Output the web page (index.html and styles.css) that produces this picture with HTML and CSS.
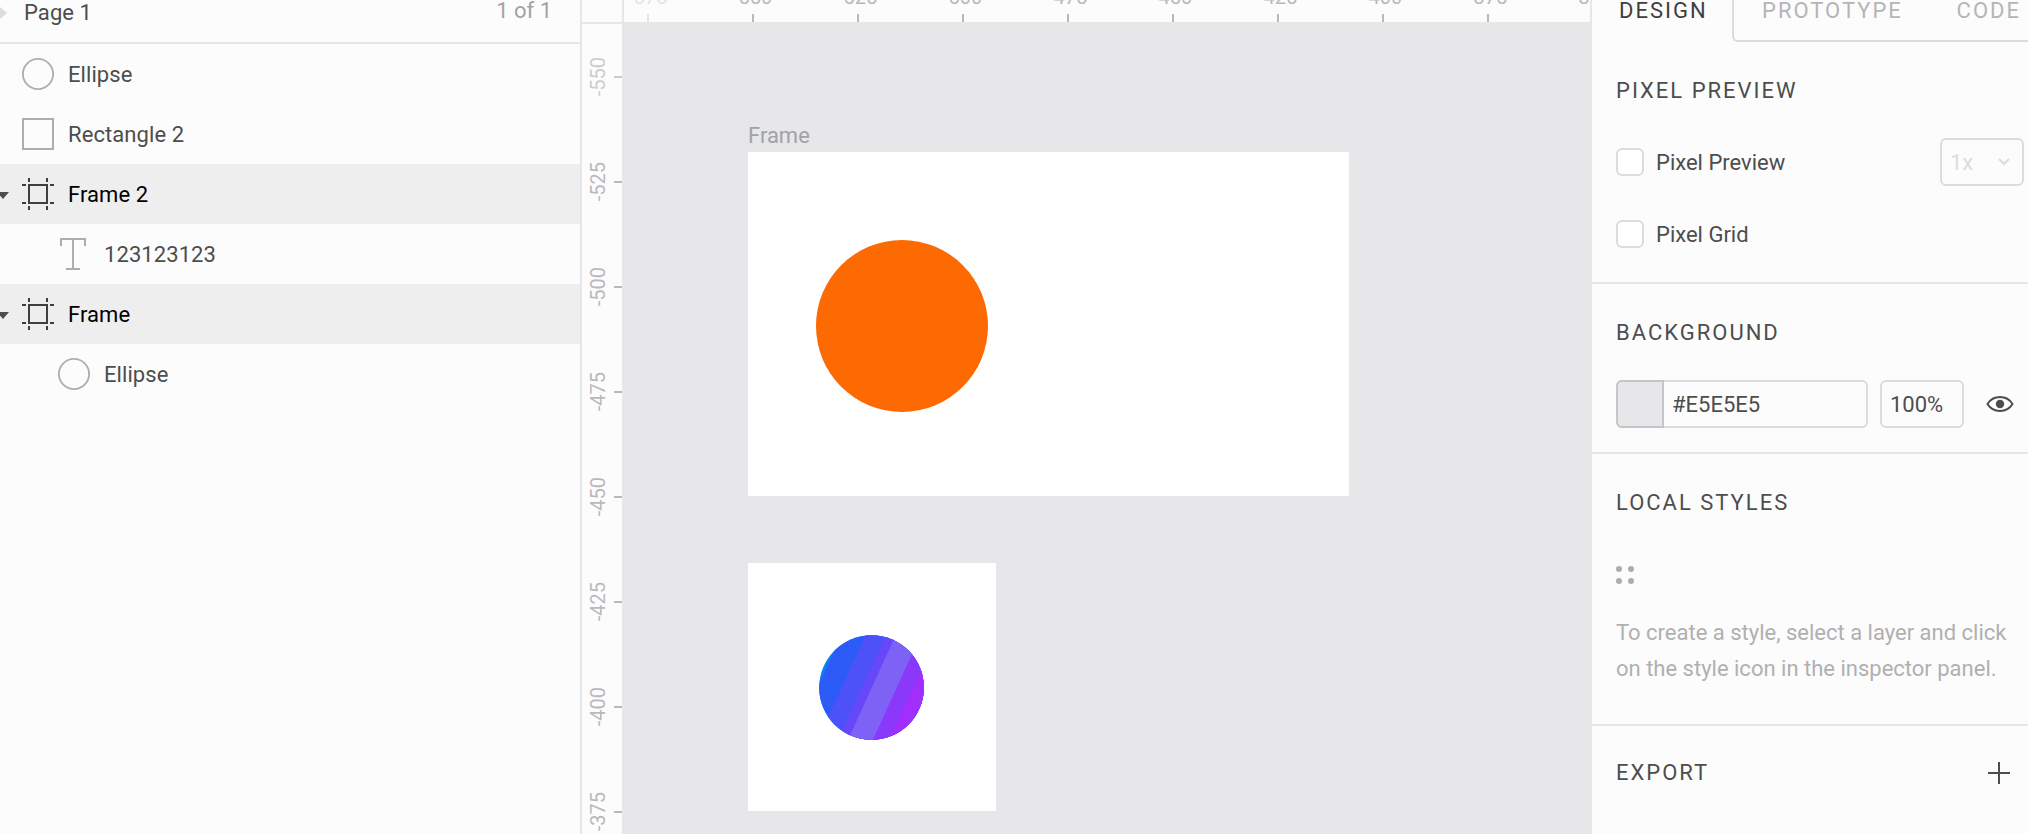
FILE: index.html
```html
<!DOCTYPE html>
<html lang="en">
<head>
<meta charset="utf-8">
<title>Editor</title>
<link rel="stylesheet" href="styles.css">
</head>
<body>
<svg class="defs" width="0" height="0">
  <symbol id="ellipse" viewBox="0 0 32 32"><circle cx="16" cy="16" r="15.1" fill="none" stroke="#adadad" stroke-width="1.8"/></symbol>
  <symbol id="rect" viewBox="0 0 32 32"><rect x="1" y="1" width="30" height="30" fill="none" stroke="#adadad" stroke-width="2"/></symbol>
  <symbol id="frame" viewBox="0 0 32 32"><path d="M7 7H25V25H7ZM7 0V4M25 0V4M7 28V32M25 28V32M0 7H4M0 25H4M28 7H32M28 25H32" fill="none" stroke="#3f3f3f" stroke-width="2"/></symbol>
  <symbol id="text" viewBox="0 0 32 32"><path d="M3 8V1H27V8M15 1V31M8 31H22" fill="none" stroke="#adadad" stroke-width="2"/></symbol>
</svg>
<div class="app">
  <aside class="layers">
    <header class="page-head">
      <svg class="page-arrow" width="7" height="12" viewBox="0 0 7 12"><path d="M0 0L7 6L0 12Z" fill="#dcdcdc"/></svg>
      <span class="page-name">Page 1</span>
      <span class="page-count">1 of 1</span>
    </header>
    <ul class="tree">
      <li class="row"><svg class="icon"><use href="#ellipse"/></svg><span>Ellipse</span></li>
      <li class="row"><svg class="icon"><use href="#rect"/></svg><span>Rectangle 2</span></li>
      <li class="row parent"><svg class="caret" viewBox="0 0 9 7"><path d="M-3 0H9L3 7Z" fill="#4d4d4d"/></svg><svg class="icon"><use href="#frame"/></svg><span>Frame 2</span></li>
      <li class="row child"><svg class="icon"><use href="#text"/></svg><span>123123123</span></li>
      <li class="row parent"><svg class="caret" viewBox="0 0 9 7"><path d="M-3 0H9L3 7Z" fill="#4d4d4d"/></svg><svg class="icon"><use href="#frame"/></svg><span>Frame</span></li>
      <li class="row child"><svg class="icon"><use href="#ellipse"/></svg><span>Ellipse</span></li>
    </ul>
  </aside>

  <main class="stage">
    <div class="corner"></div>
    <div class="ruler-x">
      <div class="tick faint"><span>-575</span></div><div class="tick"><span>-550</span></div><div class="tick"><span>-525</span></div><div class="tick"><span>-500</span></div><div class="tick"><span>-475</span></div><div class="tick"><span>-450</span></div><div class="tick"><span>-425</span></div><div class="tick"><span>-400</span></div><div class="tick"><span>-375</span></div><div class="tick"><span>-350</span></div>
    </div>
    <div class="ruler-y">
      <div class="tick soft"><span>-550</span></div><div class="tick"><span>-525</span></div><div class="tick"><span>-500</span></div><div class="tick"><span>-475</span></div><div class="tick"><span>-450</span></div><div class="tick"><span>-425</span></div><div class="tick"><span>-400</span></div><div class="tick"><span>-375</span></div>
    </div>
    <div class="canvas">
      <div class="artboard large">
        <span class="artboard-name">Frame</span>
        <div class="disc"></div>
      </div>
      <div class="artboard small">
        <svg class="striped" viewBox="118 103 316 316">
          <clipPath id="round"><circle cx="276" cy="261" r="157.5"/></clipPath>
          <g clip-path="url(#round)">
            <path d="M100 90H450V430H100Z" fill="#0c80f8"/>
            <path d="M192 90H450V430H34Z" fill="#2c5bf8"/>
            <path d="M264 90H450V430H109Z" fill="#4c51f8"/>
            <path d="M325 90H450V430H171Z" fill="#6648fa"/>
            <path d="M355 90H450V430H200Z" fill="#7e62f6"/>
            <path d="M430 90H450V430H275Z" fill="#8a38fa"/>
            <path d="M479 90H500V430H322Z" fill="#a02ffe"/>
          </g>
        </svg>
      </div>
    </div>
  </main>

  <aside class="inspector">
    <nav class="tabs">
      <span class="tab active">DESIGN</span>
      <div class="tab-rest"><span class="tab">PROTOTYPE</span><span class="tab">CODE</span></div>
    </nav>
    <section class="section">
      <h2 class="title">PIXEL PREVIEW</h2>
      <div class="line"><i class="check"></i><span>Pixel Preview</span>
        <div class="select"><span>1x</span><svg width="12" height="8" viewBox="0 0 12 8"><path d="M1 1L6 6L11 1" fill="none" stroke="#dcdcdc" stroke-width="2"/></svg></div>
      </div>
      <div class="line"><i class="check"></i><span>Pixel Grid</span></div>
    </section>
    <section class="section">
      <h2 class="title">BACKGROUND</h2>
      <div class="line">
        <div class="field hex"><i class="swatch"></i><span>#E5E5E5</span></div>
        <div class="field pct"><span>100%</span></div>
        <svg class="eye" width="28" height="18" viewBox="0 0 28 18"><path d="M1.5 9C4.5 4 9 2 14 2S23.500 4 26.500 9C23.500 14 19 16 14 16S4.500 14 1.500 9Z" fill="none" stroke="#4d4d4d" stroke-width="2"/><circle cx="14" cy="9" r="4.200" fill="#4d4d4d"/></svg>
      </div>
    </section>
    <section class="section styles">
      <h2 class="title">LOCAL STYLES</h2>
      <div class="line dots"><svg width="18" height="18" viewBox="0 0 18 18" fill="#adadad"><circle cx="3" cy="3" r="3"/><circle cx="15" cy="3" r="3"/><circle cx="3" cy="15" r="3"/><circle cx="15" cy="15" r="3"/></svg></div>
      <p class="hint">To create a style, select a layer and click<br>on the style icon in the inspector panel.</p>
    </section>
    <section class="export">
      <h2 class="title">EXPORT</h2>
      <svg class="plus" width="22" height="22" viewBox="0 0 22 22"><path d="M11 0V22M0 11H22" stroke="#4d4d4d" stroke-width="2"/></svg>
    </section>
  </aside>
</div>
</body>
</html>
```

FILE: styles.css
```css
* { box-sizing: border-box; }
body {
  margin: 0;
  overflow: hidden;
  background: #fcfcfc;
  color: #4d4d4d;
  font: 22px/36px Roboto, "Liberation Sans", sans-serif;
}
svg { display: block; flex: none; }
.defs { position: absolute; }
.app {
  display: grid;
  grid-template-columns: 582px 1010px 436px;
  width: 2028px;
  height: 834px;
  overflow: hidden;
}

.layers { border-right: 2px solid #e7e7e8; }
.page-head {
  display: flex;
  height: 44px;
  border-bottom: 2px solid #e7e7e8;
}
.page-arrow { margin: 7px 17px 0 0; }
.page-name { margin-top: -5px; letter-spacing: 0.08px; }
.page-count { margin: -7px 28px 0 auto; color: #a2a2a5; }
.tree { margin: 0; padding: 0; list-style: none; letter-spacing: 0.08px; }
.row {
  display: flex;
  align-items: center;
  gap: 13px;
  height: 60px;
  padding-left: 22px;
}
.row span { padding: 2px 0 0 1px; }
.row.parent { padding-left: 0; background: #eee; color: #000; }
.row.child { padding-left: 58px; }
.caret { width: 9px; height: 7px; margin-top: 2px; }
.icon { width: 32px; height: 32px; }

.stage {
  display: grid;
  grid-template: 22px 812px / 40px 970px;
  min-width: 0;
}
.corner { box-shadow: 2px 0 #e7e7e8, 0 2px #e7e7e8; z-index: 1; }
.ruler-x, .ruler-y {
  display: flex;
  overflow: hidden;
  color: #b9b9b9;
  font-size: 20px;
  line-height: 20px;
}
.tick { display: flex; flex: none; align-items: center; justify-content: space-between; }
.tick::after { content: ""; background: #b9b9b9; }
.ruler-x { border-right: 2px solid #e7e7e8; }
.ruler-x .tick { flex-direction: column; width: 105px; margin-top: -13px; height: 35px; }
.ruler-x .tick:first-child { margin-left: -27px; }
.ruler-x .tick::after { width: 2px; height: 8px; }
.ruler-y { flex-direction: column; }
.ruler-y .tick { height: 105px; padding-left: 6px; }
.ruler-y .tick:first-child { margin-top: 2px; }
.ruler-y .tick::after { width: 8px; height: 2px; }
.ruler-y span { writing-mode: vertical-rl; transform: rotate(180deg); }
.faint { opacity: 0.35; }
.soft { opacity: 0.7; }

.canvas { position: relative; overflow: hidden; background: #e7e7e9; }
.artboard { position: absolute; left: 126px; background: #fff; }
.large { top: 130px; width: 601px; height: 344px; }
.small { top: 541px; width: 248px; height: 248px; }
.artboard-name { position: absolute; left: 0; top: -34px; color: #a2a2a4; }
.disc {
  width: 172px;
  height: 172px;
  margin: 88px 0 0 67.5px;
  border-radius: 50%;
  background: #fd6a02;
}
.striped { width: 105px; height: 105px; margin: 72px 0 0 71px; }

.tabs { display: flex; height: 42px; letter-spacing: 2px; }
.tab { margin-top: -7px; }
.tab.active { width: 140px; padding-left: 27px; color: #3f3f3f; }
.tab-rest {
  display: flex;
  flex: 1;
  justify-content: space-between;
  margin-top: -10px;
  padding: 10px 7px 0 28px;
  border: solid #dcdcdc;
  border-width: 0 0 2px 2px;
  border-radius: 0 0 0 6px;
  color: #b5b5b5;
}
.section { padding: 12px 4px 12px 24px; border-bottom: 2px solid #e7e7e8; }
.styles { height: 272px; }
.title {
  height: 72px;
  margin: 0;
  padding-top: 1px;
  font-size: 22px;
  font-weight: 400;
  line-height: 72px;
  letter-spacing: 2px;
}
.line { display: flex; align-items: center; height: 72px; }
.line span { padding-top: 2px; }
.dots { padding-top: 2px; }
.check {
  width: 28px;
  height: 28px;
  margin-right: 12px;
  border: 2px solid #dcdcdc;
  border-radius: 6px;
  background: #fff;
}
.select, .field {
  display: flex;
  align-items: center;
  height: 48px;
  border: 2px solid #dcdcdc;
  border-radius: 6px;
}
.select { justify-content: space-between; width: 84px; margin-left: auto; padding: 0 12px 0 8px; color: #dcdcdc; }
.hex { width: 252px; margin-right: 12px; border-left: 0; }
.swatch {
  width: 48px;
  height: 48px;
  margin-right: 8px;
  border: 2px solid #c6c6c8;
  border-radius: 6px 0 0 6px;
  background: #e7e7e9;
}
.pct { width: 84px; margin-right: 22px; padding-left: 8px; }
.hint { margin: 5px 0 0; color: #b0b0b0; }
.export {
  display: flex;
  align-items: center;
  justify-content: space-between;
  padding: 10px 18px 0 24px;
}
.plus { margin-top: 2px; }
```
